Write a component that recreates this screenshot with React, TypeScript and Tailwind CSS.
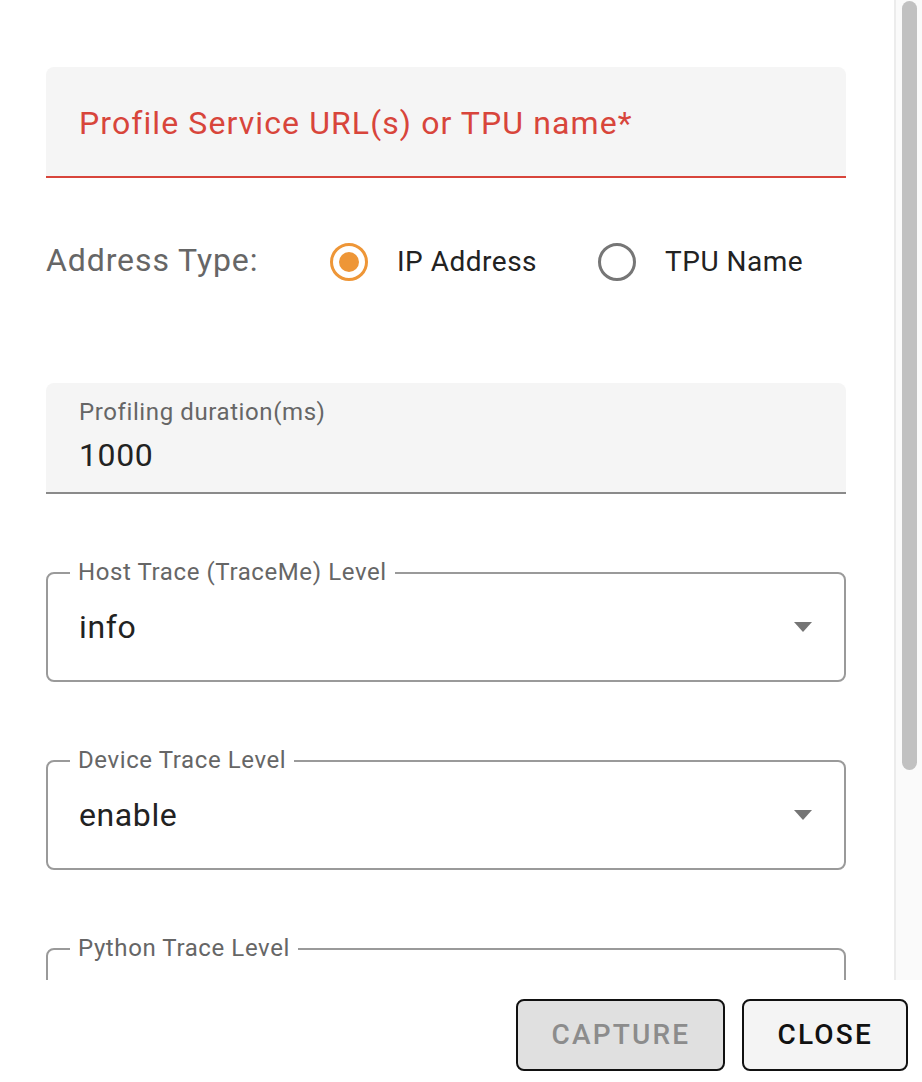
import { ReactNode } from 'react'

const font = { fontFamily: 'Roboto, "Noto Sans", sans-serif' }

function Radio({ checked, label }: { checked: boolean; label: string }) {
  return (
    <div className="flex items-center">
      <div
        className={`flex h-[38px] w-[38px] items-center justify-center rounded-full border-[3px] ${
          checked ? 'border-[#ee9637]' : 'border-[#767676]'
        }`}
      >
        {checked && <div className="h-[20px] w-[20px] rounded-full bg-[#ee9637]" />}
      </div>
      <span className="ml-[29px] text-[28px] tracking-[0.5px] text-[#222]">{label}</span>
    </div>
  )
}

function OutlinedSelect({ label, value }: { label: string; value?: string }) {
  return (
    <div className="relative h-[110px] shrink-0">
      <div className="flex h-[110px] items-center rounded-[8px] border-2 border-[#9a9a9a] pl-[31px] pr-[32px]">
        <span className="flex-1 text-[32px] tracking-[0.6px] text-[#222]">{value}</span>
        <svg width="18" height="10" viewBox="0 0 18 10">
          <path d="M0 0 L18 0 L9 10 Z" fill="#757575" />
        </svg>
      </div>
      <span className="absolute left-[24px] top-[-15px] bg-white px-[8px] text-[24px] leading-[30px] tracking-[0.6px] text-[#666]">
        {label}
      </span>
    </div>
  )
}

function Button({ children, disabled }: { children: ReactNode; disabled?: boolean }) {
  return (
    <button
      className={`flex h-[72px] items-center justify-center rounded-[8px] border-2 border-[#111] px-[33px] text-[28px] font-medium tracking-[2.2px] ${
        disabled ? 'bg-[#e0e0e0] text-[#8c8c8c]' : 'bg-[#f4f4f4] text-[#111]'
      }`}
    >
      {children}
    </button>
  )
}

export default function App() {
  return (
    <div className="flex h-[1082px] w-[922px] flex-col bg-white" style={font}>
      <div className="flex h-[980px] overflow-hidden">
        {/* Form */}
        <div className="flex flex-1 flex-col overflow-hidden pl-[46px] pr-[48px] pt-[67px]">
          <div className="flex h-[111px] shrink-0 items-center rounded-t-[8px] border-b-2 border-[#d8453b] bg-[#f5f5f5] pl-[33px]">
            <span className="mt-[2px] text-[32px] tracking-[1.1px] text-[#d8453b]">Profile Service URL(s) or TPU name*</span>
          </div>

          <div className="mt-[61px] flex h-[46px] shrink-0 items-center">
            <span className="mb-[5px] w-[284px] text-[32px] tracking-[0.9px] text-[#666]">Address Type:</span>
            <Radio checked label="IP Address" />
            <div className="w-[61px]" />
            <Radio checked={false} label="TPU Name" />
          </div>

          <div className="mt-[98px] flex h-[111px] shrink-0 flex-col rounded-t-[8px] border-b-2 border-[#8a8a8a] bg-[#f5f5f5] pl-[33px] pt-[14px]">
            <span className="text-[24px] leading-[30px] tracking-[0.6px] text-[#666]">Profiling duration(ms)</span>
            <span className="mt-[8px] text-[32px] leading-[40px] tracking-[0.6px] text-[#222]">1000</span>
          </div>

          <div className="mt-[78px] flex flex-col gap-[78px]">
            <OutlinedSelect label="Host Trace (TraceMe) Level" value="info" />
            <OutlinedSelect label="Device Trace Level" value="enable" />
            <OutlinedSelect label="Python Trace Level" />
          </div>
        </div>

        {/* Scrollbar */}
        <div className="flex w-[28px] shrink-0 border-l-2 border-[#ececec] bg-[#fafafa] pl-[6px] pt-[1px]">
          <div className="h-[769px] w-[15px] rounded-full bg-[#c1c1c1]" />
        </div>
      </div>

      <div className="flex flex-1 items-start justify-end gap-[17px] pr-[14px] pt-[19px]">
        <Button disabled>CAPTURE</Button>
        <Button>CLOSE</Button>
      </div>
    </div>
  )
}
